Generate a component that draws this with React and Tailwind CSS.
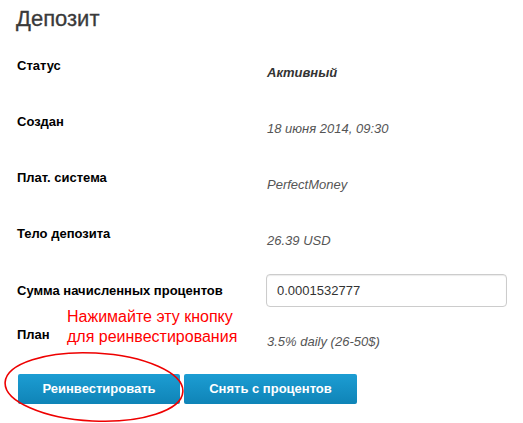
import React from "react";

const rows = [
  { label: "Статус", value: "Активный", bold: true },
  { label: "Создан", value: "18 июня 2014, 09:30" },
  { label: "Плат. система", value: "PerfectMoney" },
  { label: "Тело депозита", value: "26.39 USD" },
];

function App() {
  return (
    <div className="relative w-[523px] h-[423px] bg-white overflow-hidden font-['Liberation_Sans',Arial,sans-serif]">
      <div className="px-[16px]">
        <h1 className="pt-[6px] text-[22px] leading-[26px] text-[#3a3a3a] [-webkit-text-stroke:0.3px_#3a3a3a]">Депозит</h1>

        {/* Deposit info */}
        <div className="mt-[26px] pl-[1px]">
          {rows.map((row, i) => (
            <div key={row.label} className={`flex ${i === 3 ? "h-[48px]" : "h-14"}`}>
              <div className="w-[250px] text-[13px] leading-4 font-bold text-black">{row.label}</div>
              <div
                className={`pt-[7px] text-[13px] leading-4 italic ${
                  row.bold ? "font-bold text-[#333]" : "text-[#555]"
                }`}
              >
                {row.value}
              </div>
            </div>
          ))}

          <div className="flex items-center">
            <div className="w-[249px] text-[13px] leading-4 font-bold text-black">
              Сумма начисленных процентов
            </div>
            <input
              type="text"
              readOnly
              value="0.0001532777"
              className="w-[241px] h-[33px] px-[10px] border border-[#ccc] rounded-[4px] shadow-[inset_0_1px_1px_rgba(0,0,0,0.08)] text-[13px] text-[#333] outline-none"
            />
          </div>

          <div className="flex h-[67px]">
            <div className="w-[50px] pt-[20px] text-[13px] leading-4 font-bold text-black">План</div>
            <div className="w-[200px] pt-0 text-[16px] leading-[20px] text-[#f00]">
              Нажимайте эту кнопку
              <br />
              для реинвестирования
            </div>
            <div className="pt-[27px] text-[13px] leading-4 italic text-[#555]">3.5% daily (26-50$)</div>
          </div>
        </div>

        {/* Actions */}
        <div className="flex gap-[4px] pl-[2px]">
          <button className="w-[162px] h-[30px] rounded-[2px] bg-gradient-to-b from-[#1c9dd3] to-[#0f84b7] text-white text-[13px] font-bold">
            Реинвестировать
          </button>
          <button className="w-[173px] h-[30px] rounded-[2px] bg-gradient-to-b from-[#1c9dd3] to-[#0f84b7] text-white text-[13px] font-bold">
            Снять с процентов
          </button>
        </div>
      </div>

      {/* Hand-drawn highlight */}
      <svg className="absolute left-0 top-[345px] pointer-events-none" width="200" height="80" viewBox="0 0 200 80">
        <ellipse
          cx="94"
          cy="42"
          rx="89"
          ry="34"
          fill="none"
          stroke="#e00"
          strokeWidth="1.6"
          transform="rotate(3 94 42)"
        />
      </svg>
    </div>
  );
}

export default App;
